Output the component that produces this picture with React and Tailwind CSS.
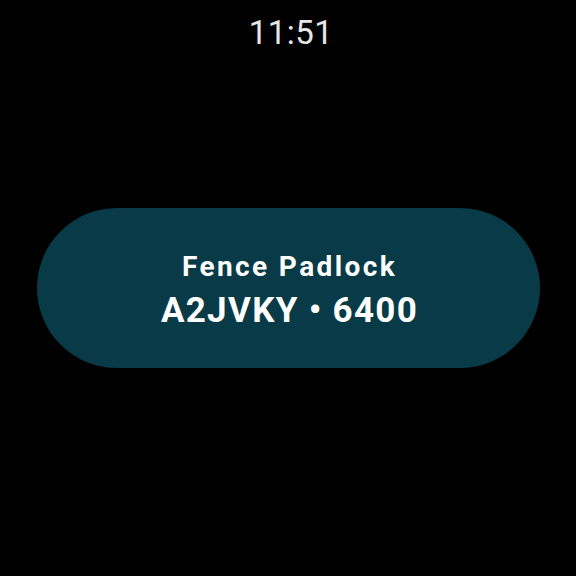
import React from 'react';

const App = () => {
  return (
    <div className="w-[576px] h-[576px] bg-black overflow-hidden flex flex-col items-center" style={{ fontFamily: 'Roboto, "Noto Sans", sans-serif' }}>
      {/* Clock */}
      <div className="h-[64px] flex items-start justify-center pt-[11px] pl-[6px] text-[33px] leading-[44px] text-[#e6e6e6] tracking-[0.5px]">
        11:51
      </div>

      {/* Lock chip */}
      <div className="mt-[144px] w-[503px] h-[160px] ml-[1px] pt-[6px] rounded-full bg-[#083b47] flex flex-col items-center justify-center text-white font-bold">
        <div className="text-[28px] leading-[34px] tracking-[2.4px] pl-[2px]">Fence Padlock</div>
        <div className="text-[35px] leading-[44px] tracking-[1.3px] mt-[5px] pl-[2px]">A2JVKY • 6400</div>
      </div>
    </div>
  );
};

export default App;
